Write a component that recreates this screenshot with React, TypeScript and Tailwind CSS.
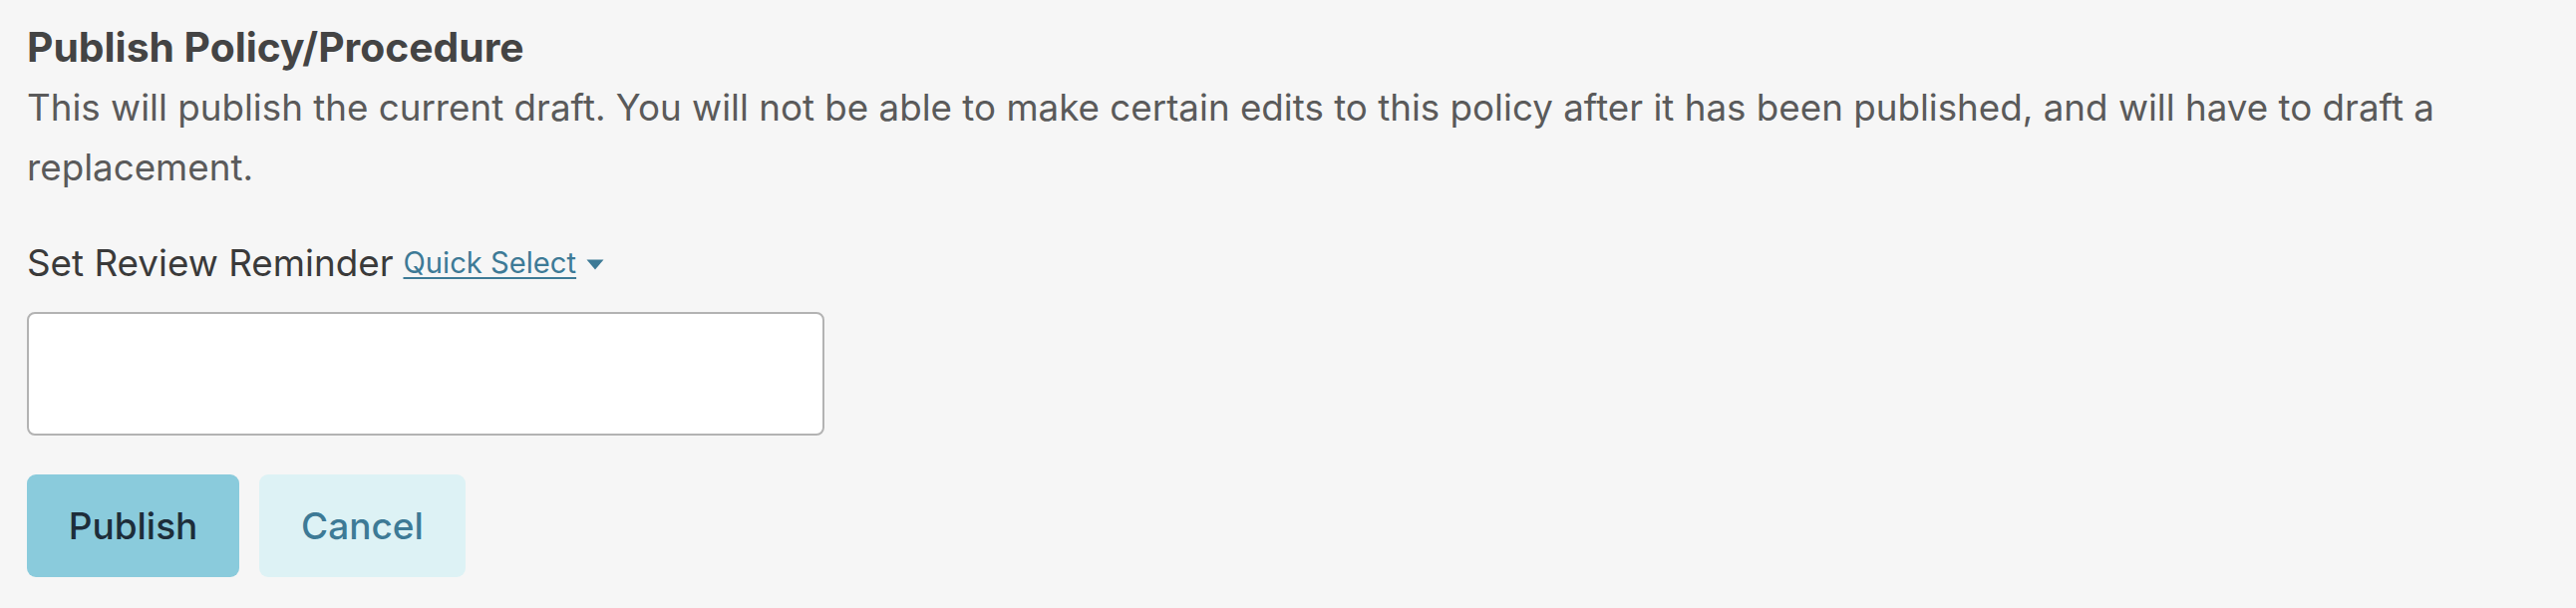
import React from 'react';

function Caret() {
  return (
    <svg width="18" height="11" viewBox="0 0 18 11" className="ml-[10px] mt-[2px] fill-[#3d7a96]">
      <path d="M0.5 0.5 H17.5 L9 10.5 Z" />
    </svg>
  );
}

export default function App() {
  return (
    <div className="min-h-[610px] w-full bg-[#f6f6f6] px-[27px] pt-[23px] font-['Inter',sans-serif]">
      <h2 className="text-[40.8px] leading-[48px] font-bold text-[#444444]">Publish Policy/Procedure</h2>
      <p className="mt-[7px] text-[36.75px] leading-[60px] text-[#5a5a5a]">
        This will publish the current draft. You will not be able to make certain edits to this policy after it has been
        published, and will have to draft a replacement.
      </p>

      <div className="mt-[36px] flex items-center text-[36.8px] leading-[60px] text-[#3a3a3a]">
        <span>Set Review Reminder</span>
        <button className="ml-[10px] flex items-center">
          <span className="text-[29.2px] leading-[60px] text-[#3d7a96] underline decoration-[2px] underline-offset-[4px]">
            Quick Select
          </span>
          <Caret />
        </button>
      </div>

      <input
        type="text"
        className="mt-[19px] block h-[124px] w-[800px] rounded-[8px] border-2 border-[#b3b3b3] bg-white px-4 text-[33px] outline-none"
      />

      <div className="mt-[39px] flex gap-[20px]">
        <button className="h-[103px] w-[213px] rounded-[9px] bg-[#8acbdc] text-[37px] font-medium text-[#1d2d3a]">
          Publish
        </button>
        <button className="h-[103px] w-[207px] rounded-[9px] bg-[#ddf2f5] text-[37px] font-medium text-[#3d7a96]">
          Cancel
        </button>
      </div>
    </div>
  );
}
